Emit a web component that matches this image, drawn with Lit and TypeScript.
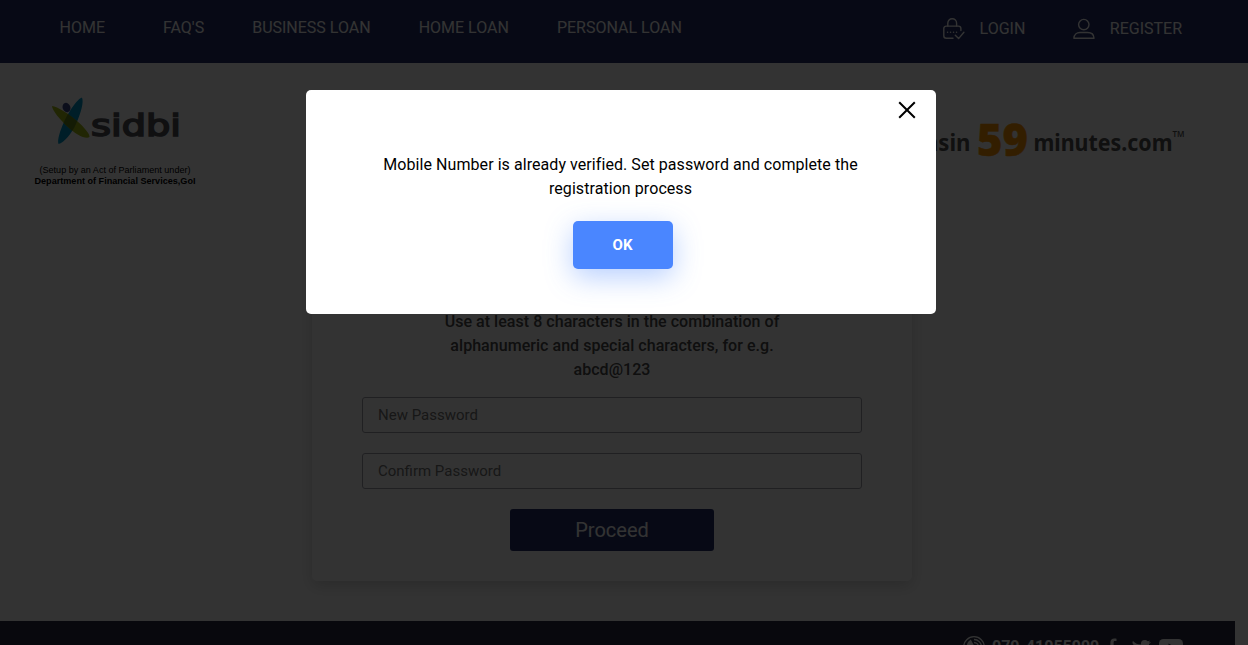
import { LitElement, html, svg, css } from "lit";
import { customElement } from "lit/decorators.js";

const lockIcon = svg`<svg width="22" height="22" viewBox="0 0 22 22" fill="none" stroke="#fff" stroke-width="1.4" stroke-linecap="round" stroke-linejoin="round">
  <path d="M4.800 8V5.200C4.800 2.700 6.700.8 9.200.8s4.400 1.900 4.400 4.400V8"/>
  <path d="M10 20.300H3.300A2.500 2.500 0 0 1 .8 17.800V10.600A2.500 2.500 0 0 1 3.300 8.100H15.400A2.500 2.500 0 0 1 17.900 10.600V12.500"/>
  <path d="M4.500 14.200h.1M7.500 14.200h.1M10.500 14.200h.1M13.500 14.200h.1"/>
  <path d="M12.300 17.300l3.300 3.300 5.300-6.400"/></svg>`;
const userIcon = svg`<svg width="22" height="22" viewBox="0 0 22 22" fill="none" stroke="#fff" stroke-width="1.4" stroke-linejoin="round">
  <circle cx="10.800" cy="6.600" r="5.200"/>
  <path d="M.9 20.300C1 16.500 3.800 14.500 7 14.500H14.500C18 14.500 20.900 16.500 21 20.300Z"/></svg>`;

@customElement("site-nav")
export class SiteNav extends LitElement {
  static styles = css`
    :host { display: block; height: 63px; background: #24306a; }
    .bar { display: flex; justify-content: space-between; height: 58px; padding: 0 66px 0 59.500px; align-items: center; color: #fff; font: 16px/24px Roboto, sans-serif; }
    .links, .account { display: flex; }
    .links { gap: 48px; padding-bottom: 2px; }
    .first { margin-right: 10px; }
    .account { gap: 47.500px; }
    .item { display: flex; align-items: center; gap: 15px; }
    svg { display: block; }
  `;
  render() {
    return html`<nav class="bar">
      <div class="links"><span class="first">HOME</span><span>FAQ'S</span><span>BUSINESS LOAN</span><span>HOME LOAN</span><span>PERSONAL LOAN</span></div>
      <div class="account"><span class="item">${lockIcon}LOGIN</span><span class="item">${userIcon}REGISTER</span></div>
    </nav>`;
  }
}

@customElement("brand-row")
export class BrandRow extends LitElement {
  static styles = css`
    :host { display: flex; justify-content: space-between; height: 137px; padding: 30px 60px 0 30px; box-sizing: border-box; }
    svg { display: block; }
    .wide { font: 29.500px "DejaVu Sans", sans-serif; fill: #505058; stroke: #505058; stroke-width: 1.600px; }
    .small { font: 9.300px "Liberation Sans", sans-serif; fill: #000; }
    .strong { font-weight: bold; }
    .name { font: bold 22.500px "Noto Sans", "Open Sans", sans-serif; fill: #505050; }
    .num { font: 800 44px "Open Sans", sans-serif; fill: #ff9800; stroke: #ff9800; stroke-width: 0.500px; }
    .tm { font: 600 9.500px "Open Sans", sans-serif; fill: #505050; }
  `;
  render() {
    return html`
      <svg width="180" height="100" viewBox="30 93 180 100">
        <defs><clipPath id="leaf"><path d="M82 97.500C77 99 68 113 64 122C60 131 57 140 58.500 144C64 143 72 133 76 124C81 113 84 102 82 97.500Z"/></clipPath></defs>
        <path d="M82 97.500C77 99 68 113 64 122C60 131 57 140 58.500 144C64 143 72 133 76 124C81 113 84 102 82 97.500Z" fill="#0098c8"/>
        <path d="M52 106C57 106 70 115 77 121C84 127 90 134 89.500 137C86 140 75 134 68 127C60 120 52 110 52 106Z" fill="#a6bc18"/>
        <path d="M52 106C57 106 70 115 77 121C84 127 90 134 89.500 137C86 140 75 134 68 127C60 120 52 110 52 106Z" fill="#64861c" clip-path="url(#leaf)"/>
        <ellipse cx="66.500" cy="107.500" rx="3.900" ry="4.700" transform="rotate(-20 66.500 107.500)" fill="#394687"/>
        <text class="wide" x="91" y="135.500" textLength="90" lengthAdjust="spacingAndGlyphs">sidbi</text>
        <text class="small" x="39.500" y="173.300" textLength="151" lengthAdjust="spacingAndGlyphs">(Setup by an Act of Parliament under)</text>
        <text class="small strong" x="34.500" y="184.300" textLength="161" lengthAdjust="spacingAndGlyphs">Department of Financial Services,GoI</text>
      </svg>
      <svg width="338" height="80" viewBox="850 93 338 80">
        <text class="name" x="851" y="151.300" textLength="119.500" lengthAdjust="spacingAndGlyphs">psbloansin</text>
        <text class="num" x="977" y="155.500" textLength="51" lengthAdjust="spacingAndGlyphs">59</text>
        <text class="name" x="1033.500" y="151.300" textLength="139" lengthAdjust="spacingAndGlyphs">minutes.com</text>
        <text class="tm" x="1172.500" y="137" textLength="12" lengthAdjust="spacingAndGlyphs">TM</text>
      </svg>`;
  }
}

@customElement("password-card")
export class PasswordCard extends LitElement {
  static styles = css`
    :host { display: flex; flex-direction: column; align-items: center; box-sizing: border-box; width: 600px; height: 381px; margin-left: 312px; padding: 110px 50px 30px; border-radius: 5px; background: #fff; box-shadow: 0 5px 15px rgba(0, 0, 0, 0.17); font-family: Roboto, sans-serif; }
    .hint { margin: 0 0 15px; width: 350px; text-align: center; font-size: 16px; line-height: 24px; font-weight: 500; letter-spacing: 0.040px; color: #4a4a4a; }
    .field { box-sizing: border-box; width: 500px; height: 36px; margin: 0 0 20px; padding: 0 15px; border: 1px solid #a0a0aa; border-radius: 3px; background: #fff; font: 15px Roboto, sans-serif; outline: none; }
    .field::placeholder { color: #757575; opacity: 1; }
    .go { width: 204px; height: 42px; padding: 0; border: 0; border-radius: 3px; background: #24306a; color: #fff; font: 20px Roboto, sans-serif; }
  `;
  render() {
    return html`<p class="hint">Use at least 8 characters in the combination of alphanumeric and special characters, for e.g. abcd@123</p>
      <input class="field" type="password" placeholder="New Password" />
      <input class="field" type="password" placeholder="Confirm Password" />
      <button class="go">Proceed</button>`;
  }
}

@customElement("site-footer")
export class SiteFooter extends LitElement {
  static styles = css`
    :host { display: flex; width: 1235px; height: 60px; margin-top: 40px; padding: 15px 52px 0 0; box-sizing: border-box; justify-content: flex-end; background: #282c40; color: #fff; font: bold 16px/22px Roboto, sans-serif; }
    .phone { width: 107px; margin: 0 9px 0 7px; white-space: nowrap; }
    svg { display: block; }
    .tw { margin: 0 8px 0 15px; }
  `;
  render() {
    return html`
      <svg width="22" height="22" viewBox="0 0 22 22" fill="none" stroke="#fff" stroke-width="1.300"><circle cx="11" cy="11" r="10.300"/><path d="M11 3.500A7.500 7.500 0 0 1 18.500 11M11 6.500A4.500 4.500 0 0 1 15.500 11"/><path d="M7.500 4.500C3 7 4 13 8 16.500C11 19 14 19 16 16L13 13.500L11 14.500L8.500 10.500L10 9Z" fill="#fff"/></svg>
      <span class="phone">079-41055999</span>
      <svg width="9" height="20" viewBox="0 0 9 20" fill="#fff"><path d="M8.500 3H6.800C5.800 3 5.600 3.700 5.600 4.700V7H8.500L8 10H5.600V19H2.400V10H0V7H2.400V4.500C2.400 1.800 4 .5 6.300.5C7.400.5 8.200.6 8.500.7Z" transform="translate(0 2)"/></svg>
      <svg class="tw" width="19" height="20" viewBox="0 0 19 20" fill="#fff"><path d="M1 5C3 7.500 6 8.500 9 8.500C8.600 6 10 4 12.500 4C14 4 15 4.500 15.700 5.200L18 4.400L16.900 6.500L19 6C18.500 7 17.800 7.500 17 8C17 15 11 20 5 19C3 19 1 18 0 17C2 17 4 16.700 5.500 15.500C3.500 15 2.300 14 2 12.800H3.500C1.500 12 .5 10.500.5 9L2 9.300C.5 8 0 6.500 1 5Z"/></svg>
      <svg width="24" height="20" viewBox="0 0 24 20"><rect y="3" width="24" height="16" rx="4.500" fill="#fff"/><path d="M9.500 7.500L16 11L9.500 14.500Z" fill="#282c40"/></svg>`;
  }
}

@customElement("notice-modal")
export class NoticeModal extends LitElement {
  static styles = css`
    :host { position: absolute; inset: 0; display: block; background: rgba(0, 0, 0, 0.8); font-family: Roboto, sans-serif; }
    .dialog { display: flex; flex-direction: column; align-items: center; box-sizing: border-box; width: 630px; height: 224px; margin: 90px 0 0 306px; border-radius: 5px; background: #fff; }
    .close { align-self: flex-end; margin: 11px 20px 0 0; }
    .msg { margin: 34px 0 20px; width: 500px; padding-right: 1px; text-align: center; font-size: 16px; line-height: 24px; letter-spacing: 0.065px; color: #000; }
    .ok { width: 100px; height: 48px; margin-left: 4px; padding: 0 1px 0 0; border: 0; border-radius: 5px; background: #4a86ff; color: #fff; font: bold 15px Roboto, sans-serif; box-shadow: 0 8px 28px rgba(74, 134, 255, 0.4); }
    svg { display: block; }
  `;
  render() {
    return html`<div class="dialog" role="dialog">
      <svg class="close" width="18" height="18" viewBox="0 0 18 18" stroke="#000" stroke-width="2"><path d="M1.200 1.200L16.800 16.800M16.800 1.200L1.200 16.800"/></svg>
      <p class="msg">Mobile Number is already verified. Set password and complete the registration process</p>
      <button class="ok">OK</button>
    </div>`;
  }
}

@customElement("app-root")
export class AppRoot extends LitElement {
  static styles = css`
    :host { display: block; position: relative; width: 1248px; height: 645px; overflow: hidden; background: #fff; }
  `;
  render() {
    return html`<site-nav></site-nav><brand-row></brand-row><password-card></password-card><site-footer></site-footer><notice-modal></notice-modal>`;
  }
}
